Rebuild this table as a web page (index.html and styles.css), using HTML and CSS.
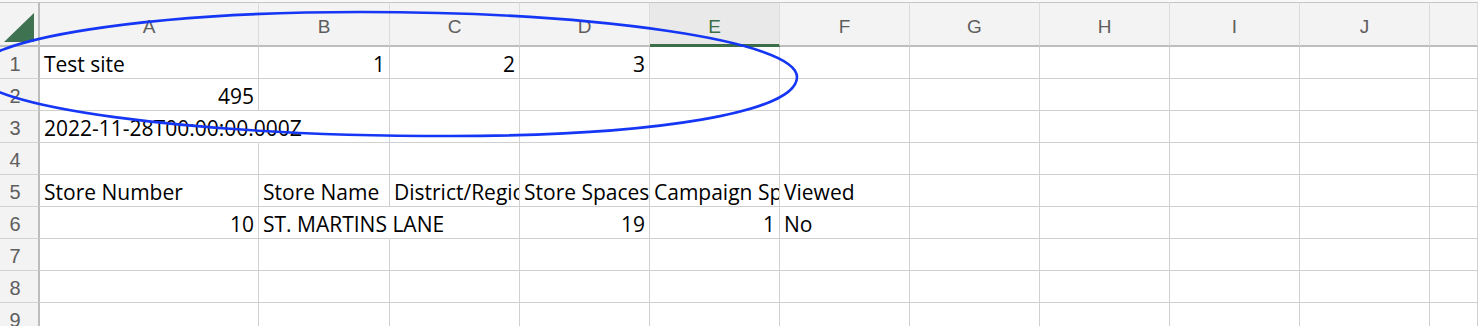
FILE: index.html
```html
<!DOCTYPE html>
<html lang="en">
<head>
    <meta charset="UTF-8">
    <meta name="viewport" content="width=device-width, initial-scale=1.0">
    <title>Store export</title>
    <link rel="stylesheet" href="styles.css">
</head>
<body>
    <div class="sheet">
        <!-- column letters -->
        <div class="corner"><span class="corner-mark"></span></div>
        <div class="col-head">A</div>
        <div class="col-head">B</div>
        <div class="col-head">C</div>
        <div class="col-head">D</div>
        <div class="col-head active">E</div>
        <div class="col-head">F</div>
        <div class="col-head">G</div>
        <div class="col-head">H</div>
        <div class="col-head">I</div>
        <div class="col-head">J</div>
        <div class="col-head"></div>

        <!-- 1 -->
        <div class="row-head">1</div>
        <div class="cell">Test site</div>
        <div class="cell num">1</div>
        <div class="cell num">2</div>
        <div class="cell num">3</div>
        <div class="cell"></div><div class="cell"></div><div class="cell"></div><div class="cell"></div><div class="cell"></div><div class="cell"></div><div class="cell"></div>

        <!-- 2 -->
        <div class="row-head">2</div>
        <div class="cell num">495</div>
        <div class="cell"></div><div class="cell"></div><div class="cell"></div><div class="cell"></div><div class="cell"></div><div class="cell"></div><div class="cell"></div><div class="cell"></div><div class="cell"></div><div class="cell"></div>

        <!-- 3 -->
        <div class="row-head">3</div>
        <div class="cell spill">2022-11-28T00:00:00.000Z</div>
        <div class="cell"></div><div class="cell"></div><div class="cell"></div><div class="cell"></div><div class="cell"></div><div class="cell"></div><div class="cell"></div><div class="cell"></div><div class="cell"></div><div class="cell"></div>

        <!-- 4 -->
        <div class="row-head">4</div>
        <div class="cell"></div><div class="cell"></div><div class="cell"></div><div class="cell"></div><div class="cell"></div><div class="cell"></div><div class="cell"></div><div class="cell"></div><div class="cell"></div><div class="cell"></div><div class="cell"></div>

        <!-- 5 -->
        <div class="row-head">5</div>
        <div class="cell">Store Number</div>
        <div class="cell">Store Name</div>
        <div class="cell">District/Region</div>
        <div class="cell">Store Spaces</div>
        <div class="cell">Campaign Spaces</div>
        <div class="cell">Viewed</div>
        <div class="cell"></div><div class="cell"></div><div class="cell"></div><div class="cell"></div><div class="cell"></div>

        <!-- 6 -->
        <div class="row-head">6</div>
        <div class="cell num">10</div>
        <div class="cell spill">ST. MARTINS LANE</div>
        <div class="cell"></div>
        <div class="cell num">19</div>
        <div class="cell num">1</div>
        <div class="cell">No</div>
        <div class="cell"></div><div class="cell"></div><div class="cell"></div><div class="cell"></div><div class="cell"></div>

        <!-- 7 -->
        <div class="row-head">7</div>
        <div class="cell"></div><div class="cell"></div><div class="cell"></div><div class="cell"></div><div class="cell"></div><div class="cell"></div><div class="cell"></div><div class="cell"></div><div class="cell"></div><div class="cell"></div><div class="cell"></div>

        <!-- 8 -->
        <div class="row-head">8</div>
        <div class="cell"></div><div class="cell"></div><div class="cell"></div><div class="cell"></div><div class="cell"></div><div class="cell"></div><div class="cell"></div><div class="cell"></div><div class="cell"></div><div class="cell"></div><div class="cell"></div>

        <!-- 9 -->
        <div class="row-head">9</div>
        <div class="cell"></div><div class="cell"></div><div class="cell"></div><div class="cell"></div><div class="cell"></div><div class="cell"></div><div class="cell"></div><div class="cell"></div><div class="cell"></div><div class="cell"></div><div class="cell"></div>
    </div>

    <!-- pen ring drawn over the header rows -->
    <svg class="markup" width="1478" height="326" viewBox="0 0 1478 326">
        <path d="M -25 72 C -25 39 148 12 360 12 C 600 12 797 41 797 77 C 797 112 658 136 450 136 C 189 136 -25 107 -25 72 Z"
              fill="none" stroke="#1536f4" stroke-width="2.6"/>
    </svg>
</body>
</html>
```

FILE: styles.css
```css
body {
    margin: 0;
    background: #f8f8f8;
    overflow: hidden;
    height: 326px;
    position: relative;
    font-family: "Open Sans", sans-serif;
}
.sheet {
    display: grid;
    grid-template-columns: 40px 219px 131px 130px 130px 130px 130px 130px 130px 130px 130px 1fr;
    grid-template-rows: 45px;
    grid-auto-rows: 32px;
    margin-top: 2px;
    background: #fff;
}
.corner, .col-head {
    box-sizing: border-box;
    background: #f3f3f3;
    border-top: 1px solid #c6c6c6;
    border-right: 1px solid #dcdcdc;
    border-bottom: 2px solid #bdbdbd;
}
.corner {
    display: flex;
    justify-content: flex-end;
    align-items: flex-end;
    padding: 0 4px 3px 0;
    border-right: 2px solid #bdbdbd;
}
.corner-mark {
    width: 30px;
    height: 29px;
    background: #3e7250;
    clip-path: polygon(100% 0, 100% 100%, 0 100%);
}
.col-head {
    font-family: "Liberation Sans", sans-serif;
    font-size: 19px;
    line-height: 20px;
    padding-top: 14px;
    text-align: center;
    color: #5e5e5e;
}
.col-head.active {
    background: #e9e9e9;
    color: #3c6e47;
    border-bottom: 3px solid #3c6e47;
}
.row-head {
    box-sizing: border-box;
    background: #f3f3f3;
    border-right: 2px solid #bdbdbd;
    border-bottom: 1px solid #d2d2d2;
    font-family: "Liberation Sans", sans-serif;
    font-size: 20px;
    line-height: 28px;
    padding: 3px 8px 0 0;
    text-align: center;
    color: #5e5e5e;
}
.cell {
    box-sizing: border-box;
    border-right: 1px solid #d0d0d0;
    border-bottom: 1px solid #d0d0d0;
    padding: 3px 4px 0 4px;
    font-size: 21px;
    line-height: 28px;
    white-space: nowrap;
    overflow: hidden;
    color: #000;
}
.cell.num {
    text-align: right;
}
/* text running on into an empty neighbour hides the gridline under it */
.cell.spill {
    overflow: visible;
    border-right-color: transparent;
}
.markup {
    position: absolute;
    top: 0;
    left: 0;
    pointer-events: none;
}
```
